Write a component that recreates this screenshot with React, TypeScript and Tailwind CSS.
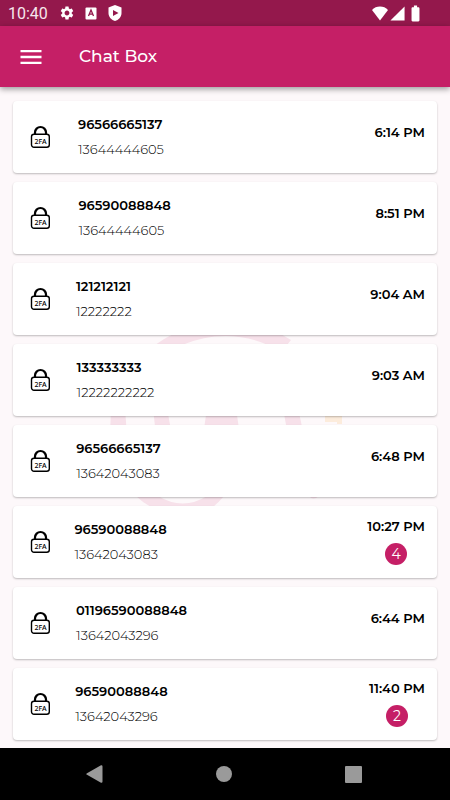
import { MdBatteryFull, MdMenu, MdSettings, MdSignalCellular4Bar } from 'react-icons/md'

interface Chat {
  id: number
  name: string
  phone: string
  time: string
  unread?: number
}

const chats: Chat[] = [
  { id: 1, name: '96566665137', phone: '13644444605', time: '6:14 PM' },
  { id: 2, name: '96590088848', phone: '13644444605', time: '8:51 PM' },
  { id: 3, name: '121212121', phone: '12222222', time: '9:04 AM' },
  { id: 4, name: '133333333', phone: '12222222222', time: '9:03 AM' },
  { id: 5, name: '96566665137', phone: '13642043083', time: '6:48 PM' },
  { id: 6, name: '96590088848', phone: '13642043083', time: '10:27 PM', unread: 4 },
  { id: 7, name: '01196590088848', phone: '13642043296', time: '6:44 PM' },
  { id: 8, name: '96590088848', phone: '13642043296', time: '11:40 PM', unread: 2 },
]

function StatusBar() {
  return (
    <div className="flex h-[26px] items-center justify-between bg-[#94184c] pr-[25px] pl-2 text-white">
      <div className="flex items-center gap-2">
        <span className="pt-0.5 font-[Roboto,sans-serif] text-base leading-5 text-[#f6e6ed]">10:40</span>
        <div className="flex items-center gap-2 pl-[3px]">
          <MdSettings className="size-4" />
          <svg viewBox="0 0 16 16" className="size-4">
            <rect x="2.5" y="2.5" width="11" height="12" rx="1" fill="white" />
            <path d="M5.5 11 8 5 10.5 11M6.2 9.2H9.8" fill="none" stroke="#94184c" strokeWidth="1.3" />
          </svg>
          <svg viewBox="0 0 16 16" className="size-4">
            <path d="M8 0 14.5 2.5V8C14.5 12 11.5 15 8 16 4.5 15 1.5 12 1.5 8V2.5Z" fill="white" />
            <path d="M6 5 11.5 8 6 11Z" fill="#94184c" />
          </svg>
        </div>
      </div>
      <div className="flex items-center">
        <svg viewBox="0 0 18 16" className="h-4 w-[18px]">
          <path d="M9 15.5 1 5C3 2.5 6 1.5 9 1.5S15 2.5 17 5Z" fill="white" />
        </svg>
        <MdSignalCellular4Bar className="size-[17px]" />
        <MdBatteryFull className="size-[19px]" />
      </div>
    </div>
  )
}

function LockIcon() {
  return (
    <svg viewBox="0 0 20 24" className="h-6 w-5 shrink-0">
      <path d="M5 9V7.5a5.5 5.5 0 0 1 11 0V9" fill="none" stroke="black" strokeWidth="2.2" />
      <rect x="1.5" y="9.2" width="17.8" height="13" rx="2.5" fill="white" stroke="black" strokeWidth="1.4" />
      <text
        x="10.5"
        y="18.5"
        textAnchor="middle"
        fontFamily="Noto Sans, sans-serif"
        fontSize="7"
        fontWeight="500"
      >
        2FA
      </text>
    </svg>
  )
}

function Watermark() {
  return (
    <div className="absolute inset-0 flex items-center justify-center" aria-hidden="true">
      <svg viewBox="0 0 240 180" className="h-[180px] w-60" fill="none">
        <g fill="#f7e1ea">
          <path d="M50 17Q60 10 70 5Q120-12 174 5L186 12L182 17H163Q121-1 77 17Z" />
          <path d="M6 80H20L22 108H5Z" />
          <path d="M48 80H62L67 108H51Z" />
          <path d="M102 80H131L135 108H98Z" />
          <path d="M178 80H193L199 108H183Z" />
          <path d="M31 168H53Q78 183 102 168H119Q114 174 108 179H46Q37 174 31 168Z" />
          <path d="M204 168H214Q208 173 204 168Z" />
        </g>
        <path d="M220 80H237V96H232V94H220Z" fill="#fcecdc" />
      </svg>
    </div>
  )
}

function ChatCard({ chat }: { chat: Chat }) {
  return (
    <li className="flex h-[72px] items-center justify-between rounded bg-white pr-3 pl-[17px] text-[13px] text-black shadow-[0_1px_2px_rgba(0,0,0,0.25)]">
      <LockIcon />
      <div className="w-[68%] leading-[25px]">
        <p className="font-semibold">{chat.name}</p>
        <p className="font-light">{chat.phone}</p>
      </div>
      <div className={chat.unread ? 'flex flex-col items-center gap-[7px] pb-1' : 'pb-2.5'}>
        <time className="block leading-5 font-semibold whitespace-nowrap">{chat.time}</time>
        {chat.unread && (
          <span className="flex size-[22px] items-center justify-center rounded-full bg-[#c51f66] text-sm text-white">
            {chat.unread}
          </span>
        )}
      </div>
    </li>
  )
}

function NavigationBar() {
  return (
    <nav className="flex h-[52px] items-center justify-between bg-black pr-[19.5%] pl-[19%] text-[#9a9a9a]">
      <button type="button" aria-label="Back">
        <svg viewBox="0 0 18 18" className="size-[18px]" fill="currentColor">
          <path d="M1 8.2 15 .3Q16.500 0 16.500 1.500V16.500Q16.500 18 15 17.700L1 9.800Q-.5 9 1 8.2Z" />
        </svg>
      </button>
      <button type="button" aria-label="Home" className="size-4 rounded-full bg-[#9a9a9a]" />
      <button type="button" aria-label="Recent apps" className="size-[17px] rounded-[1px] bg-[#9a9a9a]" />
    </nav>
  )
}

export default function App() {
  return (
    <div className="flex min-h-screen flex-col bg-[#fdf8fa] font-[Montserrat,Inter,sans-serif]">
      <StatusBar />
      <header className="relative z-10 flex h-[61px] items-center gap-[34px] bg-[#c51f66] px-[17px] text-white shadow-[0_2px_6px_rgba(0,0,0,0.4)]">
        <button type="button" aria-label="Open menu">
          <MdMenu className="size-7" />
        </button>
        <h1 className="text-[17px] font-medium">Chat Box</h1>
      </header>
      <main className="relative flex-1 px-[13px] pt-[14px] pb-2">
        <Watermark />
        <ul className="relative flex flex-col gap-[9px]">
          {chats.map((chat) => (
            <ChatCard key={chat.id} chat={chat} />
          ))}
        </ul>
      </main>
      <NavigationBar />
    </div>
  )
}
